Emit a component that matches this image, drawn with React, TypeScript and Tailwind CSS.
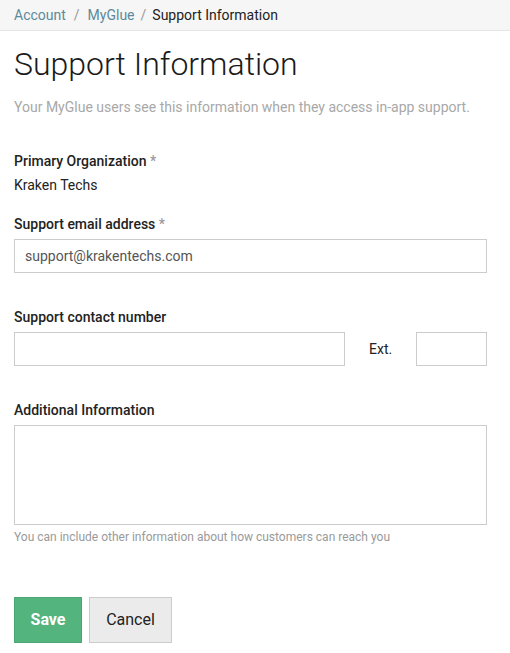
import React from 'react';

export default function App() {
  return (
    <div className="min-h-screen bg-white text-[#222] font-['Roboto',sans-serif]">
      <div className="h-[31px] bg-[#f6f6f6] border-b border-[#e6e6e6] px-[14px] flex items-center text-[14px] leading-[20px]">
        <span className="text-[#5b8a9b]">Account</span>
        <span className="text-[#999] mx-[8px]">/</span>
        <span className="text-[#5b8a9b]">MyGlue</span>
        <span className="text-[#999] mx-[6px]">/</span>
        <span className="text-[#222]">Support Information</span>
      </div>

      <div className="px-[14px] text-[14px] leading-[20px]">
        <h1 className="mt-[13px] text-[32px] leading-[40px] font-light text-[#1a1a1a]">Support Information</h1>
        <p className="mt-[13px] text-[#a8a8a8]">
          Your MyGlue users see this information when they access in-app support.
        </p>

        <div className="mt-[34px] font-medium">
          Primary Organization <span className="text-[#999]">*</span>
        </div>
        <div className="mt-[4px]">Kraken Techs</div>

        <div className="mt-[19px] font-medium">
          Support email address <span className="text-[#999]">*</span>
        </div>
        <input
          defaultValue="support@krakentechs.com"
          className="mt-[5px] block w-[473px] h-[34px] border border-[#ccc] px-[10px] text-[14px] text-[#555] outline-none"
        />

        <div className="mt-[34px] font-medium">Support contact number</div>
        <div className="mt-[5px] flex items-center">
          <input className="block w-[331px] h-[34px] border border-[#ccc] px-[10px] text-[14px] outline-none" />
          <span className="ml-[24px] w-[47px]">Ext.</span>
          <input className="block w-[71px] h-[34px] border border-[#ccc] px-[10px] text-[14px] outline-none" />
        </div>

        <div className="mt-[34px] font-medium">Additional Information</div>
        <textarea className="mt-[5px] block w-[473px] h-[100px] border border-[#ccc] px-[10px] py-[6px] text-[14px] outline-none resize-none" />
        <div className="mt-[4px] text-[12px] leading-[16px] text-[#9a9a9a]">
          You can include other information about how customers can reach you
        </div>

        <div className="mt-[52px] flex gap-[7px]">
          <button className="w-[68px] h-[46px] bg-[#53b47e] border border-[#4aa873] text-white text-[16px] font-bold">
            Save
          </button>
          <button className="w-[83px] h-[46px] bg-[#ebebeb] border border-[#ccc] text-[#222] text-[16px]">
            Cancel
          </button>
        </div>
      </div>
    </div>
  );
}
